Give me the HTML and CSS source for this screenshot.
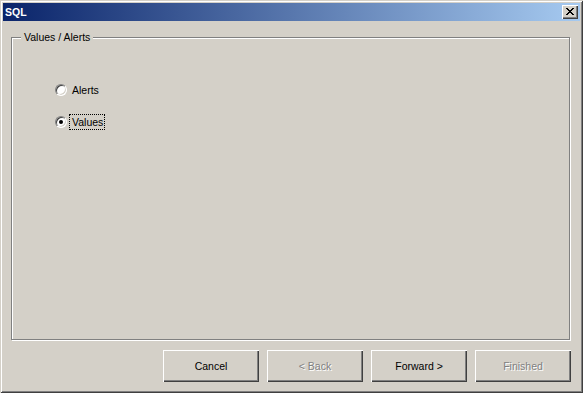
FILE: index.html
```html
<!DOCTYPE html>
<html>
<head>
<meta charset="utf-8">
<link rel="stylesheet" href="styles.css">
</head>
<body>
<div class="window">
  <div class="titlebar">
    <span class="title">SQL</span>
    <div class="close">
      <svg width="8" height="7" viewBox="0 0 8 7" shape-rendering="crispEdges">
        <path d="M0 0h2v1H0zM6 0h2v1H6zM1 1h2v1H1zM5 1h2v1H5zM2 2h4v1H2zM3 3h2v1H3zM2 4h4v1H2zM1 5h2v1H1zM5 5h2v1H5zM0 6h2v1H0zM6 6h2v1H6z" fill="#000"/>
      </svg>
    </div>
  </div>
  <div class="content">
    <div class="group">
      <span class="legend">Values / Alerts</span>
      <div class="options">
        <div class="option">
          <span class="radio"></span>
          <span class="label">Alerts</span>
        </div>
        <div class="option">
          <span class="radio checked"></span>
          <span class="label focused">Values</span>
        </div>
      </div>
    </div>
    <div class="buttons">
      <div class="btn">Cancel</div>
      <div class="btn disabled">&lt; Back</div>
      <div class="btn">Forward &gt;</div>
      <div class="btn disabled">Finished</div>
    </div>
  </div>
</div>
</body>
</html>
```

FILE: styles.css
```css
* { box-sizing: border-box; }
html, body { margin: 0; padding: 0; background: #d4d0c8; }
body {
  font-family: "Liberation Sans", Arial, sans-serif;
  font-size: 10.5px;
  color: #000;
}
.window {
  width: 583px;
  height: 393px;
  padding: 3px;
  background: #d4d0c8;
  display: flex;
  flex-direction: column;
  box-shadow: inset 1px 1px #d4d0c8, inset -1px -1px #404040, inset 2px 2px #ffffff, inset -2px -2px #808080;
}
.titlebar {
  height: 18px;
  flex: none;
  background: linear-gradient(to right, #0a246a, #a6caf0);
  display: flex;
  align-items: center;
  justify-content: space-between;
  padding: 0 2px 0 2px;
}
.title {
  color: #fff;
  font-weight: bold;
  font-size: 10.5px;
  line-height: 18px;
}
.close {
  width: 16px;
  height: 14px;
  background: #d4d0c8;
  box-shadow: inset 1px 1px #ffffff, inset -1px -1px #404040, inset -2px -2px #808080;
  display: flex;
  align-items: flex-start;
  justify-content: flex-start;
  padding: 3px 0 0 4px;
}
.close svg { display: block; }
.content {
  flex: 1;
  display: flex;
  flex-direction: column;
  padding: 16px 9px 8px 8px;
}
.group {
  position: relative;
  height: 303px;
  margin-right: 1px;
  border: 1px solid #808080;
  box-shadow: inset 1px 1px #ffffff, 1px 1px #ffffff;
}
.legend {
  position: absolute;
  top: -7px;
  left: 9px;
  padding: 0 3px 0 3px;
  background: #d4d0c8;
  line-height: 13px;
}
.options {
  padding: 45px 0 0 43px;
  display: flex;
  flex-direction: column;
  gap: 19px;
}
.option {
  display: flex;
  align-items: center;
  height: 13px;
}
.radio {
  width: 12px;
  height: 12px;
  border-radius: 50%;
  background: #fff;
  border: 1px solid;
  border-color: #808080 #ffffff #ffffff #808080;
  box-shadow: inset 1px 1px #404040, inset -1px -1px #d4d0c8;
  position: relative;
  flex: none;
}
.radio.checked::after {
  content: "";
  position: absolute;
  left: 3px;
  top: 3px;
  width: 4px;
  height: 4px;
  border-radius: 50%;
  background: #000;
}
.label {
  margin-left: 2px;
  padding: 1px 1px 1px 2px;
  border: 1px dotted transparent;
  line-height: 12px;
}
.label.focused { border-color: #000; }
.buttons {
  margin-top: 10px;
  display: flex;
  justify-content: flex-end;
  gap: 8px;
}
.btn {
  width: 96px;
  height: 32px;
  display: flex;
  align-items: center;
  justify-content: center;
  background: #d4d0c8;
  box-shadow: inset 1px 1px #ffffff, inset -1px -1px #404040, inset -2px -2px #808080;
}
.btn.disabled {
  color: #808080;
  text-shadow: 1px 1px #ffffff;
}
```
